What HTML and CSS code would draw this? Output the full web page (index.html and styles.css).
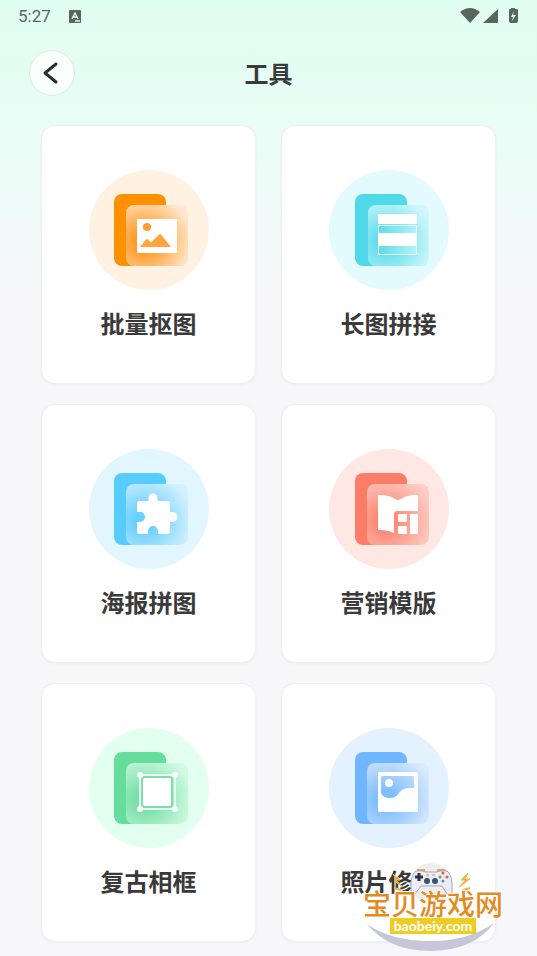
FILE: index.html
```html
<!DOCTYPE html>
<html lang="zh-CN">
<head>
    <meta charset="UTF-8">
    <meta name="viewport" content="width=device-width, initial-scale=1.0">
    <title>工具</title>
    <link rel="stylesheet" href="styles.css">
</head>
<body>
    <div class="status-bar">
        <span class="time">5:27</span>
        <svg class="status-app" viewBox="0 0 12 13" width="12" height="13">
            <rect width="12" height="13" rx="1" fill="#57665f"/>
            <path d="M3 9L6 3L9 9M4 7H8M6 11H11" fill="none" stroke="#e4fdf3" stroke-width="1.3"/>
        </svg>
        <svg class="status-icons" viewBox="0 0 59 18" width="59" height="18">
            <path d="M0 5Q10 -3 20 5L10 16Z" fill="#57665f"/>
            <path d="M23 16L38 2V16Z" fill="#57665f"/>
            <path d="M51 1H55V2H57Q58 2 58 3V14Q58 16 56 16H51Q49 16 49 14V3Q49 2 50 2H51Z" fill="#57665f"/>
            <path d="M54 4L51 10H53L52 14L56 8H53Z" fill="#e4fdf3"/>
        </svg>
    </div>

    <header class="header">
        <button class="back-button" type="button" aria-label="返回">
            <svg viewBox="0 0 44 44" width="44" height="44">
                <path d="M26 13L15 22L26 31" fill="none" stroke="#2b2e2d" stroke-width="3" stroke-linecap="round" stroke-linejoin="round"/>
            </svg>
        </button>
        <h1>工具</h1>
    </header>

    <main class="tools">
        <a class="tool" href="#cutout">
            <svg class="tool-icon" viewBox="0 0 120 120">
                <defs>
                    <radialGradient id="orange" cx="0.3" cy="0.6" r="0.78">
                        <stop offset="0.2" stop-color="#ff9a24"/>
                        <stop offset="1" stop-color="#ffe8cf"/>
                    </radialGradient>
                </defs>
                <circle cx="60" cy="60" r="60" fill="#fff2e3"/>
                <rect x="25" y="24" width="52" height="72" rx="8" fill="#ff9100"/>
                <rect x="37" y="35" width="62" height="61" rx="8" fill="url(#orange)"/>
                <rect x="48" y="49" width="40" height="34" rx="1" fill="#fff"/>
                <circle cx="58" cy="57" r="4" fill="#ff9d2e"/>
                <path d="M51 77L57 69.500Q58 68.500 59 69.500L62 72.500L70 64.500Q71 63.500 72 64.500L82 77Z" fill="#ffa53f"/>
            </svg>
            <span class="tool-name">批量抠图</span>
        </a>

        <a class="tool" href="#stitch">
            <svg class="tool-icon" viewBox="0 0 120 120">
                <defs>
                    <radialGradient id="cyan" cx="0.3" cy="0.6" r="0.78">
                        <stop offset="0.2" stop-color="#62ddea"/>
                        <stop offset="1" stop-color="#d0f8fc"/>
                    </radialGradient>
                    <linearGradient id="cyan-bar">
                        <stop offset="0" stop-color="#5edcea"/>
                        <stop offset="1" stop-color="#b4f1f8"/>
                    </linearGradient>
                </defs>
                <circle cx="60" cy="60" r="60" fill="#e3fbff"/>
                <rect x="26" y="24" width="52" height="72" rx="8" fill="#50d9e9"/>
                <rect x="39" y="35" width="61" height="61" rx="8" fill="url(#cyan)"/>
                <rect x="49" y="44" width="39" height="10" rx="1" fill="#fff"/>
                <rect x="49.500" y="55.500" width="38" height="29" fill="url(#cyan-bar)" stroke="#e3fbff"/>
                <rect x="49" y="63" width="39" height="13" fill="#fff"/>
            </svg>
            <span class="tool-name">长图拼接</span>
        </a>

        <a class="tool" href="#poster">
            <svg class="tool-icon" viewBox="0 0 120 120">
                <defs>
                    <radialGradient id="sky" cx="0.3" cy="0.6" r="0.78">
                        <stop offset="0.2" stop-color="#6ad0fd"/>
                        <stop offset="1" stop-color="#d4f1fe"/>
                    </radialGradient>
                </defs>
                <circle cx="60" cy="60" r="60" fill="#e2f6ff"/>
                <rect x="25" y="24" width="52" height="72" rx="8" fill="#58ccff"/>
                <rect x="37" y="35" width="62" height="61" rx="8" fill="url(#sky)"/>
                <path d="M50 52H59.500V49A4.500 4.500 0 0 1 68.500 49V52H79Q81 52 81 54V63H83.500A4.500 4.500 0 0 1 83.500 73H81V83Q81 85 79 85H69V82A5 5 0 0 0 59 82V85H50Q48 85 48 83V73H51A5 5 0 0 0 51 63H48V54Q48 52 50 52Z" fill="#fff"/>
            </svg>
            <span class="tool-name">海报拼图</span>
        </a>

        <a class="tool" href="#template">
            <svg class="tool-icon" viewBox="0 0 120 120">
                <defs>
                    <radialGradient id="coral" cx="0.3" cy="0.6" r="0.78">
                        <stop offset="0.2" stop-color="#fd8977"/>
                        <stop offset="1" stop-color="#ffcdc5"/>
                    </radialGradient>
                </defs>
                <circle cx="60" cy="60" r="60" fill="#ffe8e4"/>
                <rect x="26" y="24" width="52" height="72" rx="8" fill="#fb7d68"/>
                <rect x="38" y="35" width="62" height="61" rx="8" fill="url(#coral)"/>
                <path d="M49 47Q49 46 50 46Q61 46 66 50Q69 52 72 50Q77 46 87 46Q89 46 89 48V62H68Q65 62 65 65V84Q59 81 50 81Q49 81 49 80Z" fill="#fff"/>
                <rect x="69" y="65" width="9" height="8" rx="1" fill="#fff"/>
                <rect x="69" y="77" width="9" height="8" rx="1" fill="#fff"/>
                <rect x="81" y="65" width="8" height="20" rx="1" fill="#fff"/>
            </svg>
            <span class="tool-name">营销模版</span>
        </a>

        <a class="tool" href="#frame">
            <svg class="tool-icon" viewBox="0 0 120 120">
                <defs>
                    <radialGradient id="green" cx="0.3" cy="0.6" r="0.78">
                        <stop offset="0.2" stop-color="#79dfa7"/>
                        <stop offset="1" stop-color="#d1fae3"/>
                    </radialGradient>
                </defs>
                <circle cx="60" cy="60" r="60" fill="#e2fff0"/>
                <rect x="25" y="24" width="52" height="72" rx="8" fill="#67dd9d"/>
                <rect x="37" y="35" width="62" height="61" rx="8" fill="url(#green)"/>
                <rect x="51" y="47" width="35" height="34" fill="none" stroke="#e9fff3" stroke-width="2"/>
                <rect x="53" y="49" width="30" height="30" rx="3" fill="#fff" stroke="#7de0aa" stroke-width="2"/>
                <g fill="#fff">
                    <circle cx="51" cy="47" r="3"/>
                    <circle cx="86" cy="47" r="3"/>
                    <circle cx="51" cy="81" r="3"/>
                    <circle cx="86" cy="81" r="3"/>
                </g>
            </svg>
            <span class="tool-name">复古相框</span>
        </a>

        <a class="tool" href="#repair">
            <svg class="tool-icon" viewBox="0 0 120 120">
                <defs>
                    <radialGradient id="blue" cx="0.3" cy="0.6" r="0.78">
                        <stop offset="0.2" stop-color="#80beff"/>
                        <stop offset="1" stop-color="#d8eaff"/>
                    </radialGradient>
                </defs>
                <circle cx="60" cy="60" r="60" fill="#e4f1ff"/>
                <rect x="26" y="24" width="52" height="72" rx="8" fill="#70b6ff"/>
                <rect x="38" y="35" width="62" height="61" rx="8" fill="url(#blue)"/>
                <path fill-rule="evenodd" d="M51 44H87Q89 44 89 46V84H51Q49 84 49 82V46Q49 44 51 44ZM53 48Q52 48 52 49V65Q54 70 61 70Q67 70 70 65Q74 60 81 60H85V49Q85 48 84 48Z" fill="#fff"/>
                <circle cx="60" cy="55" r="4" fill="#fff"/>
            </svg>
            <span class="tool-name">照片修复</span>
        </a>
    </main>

    <div class="site-badge">
        <svg class="badge-art" viewBox="0 0 140 90" width="140" height="90">
            <!-- smile -->
            <path d="M4 62Q28 79 67 79Q106 79 131 61Q110 89 67 89Q26 89 4 62Z" fill="#c5c7d8"/>
            <!-- gamepad -->
            <circle cx="68" cy="21" r="20" fill="#eeeeee"/>
            <path d="M54 8H62M74 8H82" stroke="#e5a93c" stroke-width="2"/>
            <path d="M53 9Q59 8 63 10H73Q78 8 84 9Q88 12 89 20V32Q87 35 84 32L79 24H58L52 32Q49 35 48 32V20Q49 12 53 9Z" fill="#ececf3" stroke="#a2a5bd"/>
            <path d="M56 11V19M52 15H60" stroke="#2c3149" stroke-width="3"/>
            <circle cx="64" cy="19" r="3" fill="#36536b"/>
            <circle cx="72" cy="19" r="3" fill="#36536b"/>
            <path d="M63 13H66M69 13H72" stroke="#e97885"/>
            <circle cx="80" cy="11" r="1.500" fill="#e55361"/>
            <circle cx="77" cy="15" r="1.500" fill="#58aa68"/>
            <circle cx="84" cy="15" r="1.500" fill="#e55361"/>
            <circle cx="80" cy="19" r="1.500" fill="#4c91ce"/>
            <!-- sparks -->
            <path d="M105 11L98 18L103 18L96 25L107 17L102 17ZM30 12L37 18L33 18L40 25L31 19L34 18Z" fill="#f2b53c" stroke="#f2b53c"/>
            <path d="M107 26L100 28M31 26L38 28" stroke="#f2b53c" stroke-width="2"/>
        </svg>
        <span class="badge-name">宝贝游戏网</span>
        <span class="badge-url">baobeiy.com</span>
    </div>
</body>
</html>
```

FILE: styles.css
```css
* {
    box-sizing: border-box;
}

body {
    margin: 0;
    min-height: 100vh;
    position: relative;
    background: #f7f7fa linear-gradient(to bottom, #e1fef2 0, #e7fdf5 120px, #f7f7fa 290px) no-repeat;
    font-family: "Noto Sans CJK SC", sans-serif;
    color: #3a3a3a;
}

/* Status bar */
.status-bar {
    display: flex;
    align-items: center;
    height: 32px;
    padding: 0 18px;
}

.time {
    font-family: Roboto, sans-serif;
    font-size: 17px;
    color: #57665f;
}

.status-app {
    margin-left: 18px;
}

.status-icons {
    margin-left: auto;
}

/* Header */
.header {
    display: grid;
    grid-template-columns: 46px 1fr 46px;
    align-items: center;
    padding: 18px 29px 29px;
}

.header h1 {
    margin: 0;
    font-size: 24px;
    line-height: 36px;
    font-weight: 700;
    text-align: center;
}

.back-button {
    width: 46px;
    height: 46px;
    padding: 0;
    border: 1px solid #dfe9e5;
    border-radius: 50%;
    background: #f8fffc;
    cursor: pointer;
}

.back-button svg {
    display: block;
}

/* Tool cards */
.tools {
    display: grid;
    grid-template-columns: 1fr 1fr;
    gap: 20px 25px;
    padding: 0 41px 14px;
}

.tool {
    display: flex;
    flex-direction: column;
    align-items: center;
    padding: 44px 10px 42px;
    border: 1px solid #eeeff1;
    border-radius: 14px;
    background: #fff;
    box-shadow: 0 1px 3px rgba(0, 0, 0, 0.04);
    color: #3a3a3a;
    text-decoration: none;
}

.tool-icon {
    width: 120px;
    height: 120px;
}

.tool-name {
    margin-top: 15px;
    font-size: 24px;
    line-height: 36px;
    font-weight: 700;
}

/* Site badge over the corner */
.site-badge {
    position: absolute;
    right: 34px;
    bottom: 4px;
    width: 140px;
    height: 90px;
    display: flex;
    flex-direction: column;
    align-items: center;
    padding-top: 28px;
}

.badge-art {
    position: absolute;
    top: 0;
    left: 0;
}

.badge-name {
    position: relative;
    margin-bottom: 2px;
    font-size: 28px;
    line-height: 26px;
    font-weight: 500;
    color: #e58a1f;
    text-shadow: 1px 0 #fff, -1px 0 #fff, 0 1px #fff, 0 -1px #fff;
    white-space: nowrap;
}

.badge-url {
    position: relative;
    width: 86px;
    background: #efcc22;
    color: #fff;
    font-family: Lato, sans-serif;
    font-size: 14px;
    line-height: 16px;
    font-weight: 700;
    text-align: center;
}
```
